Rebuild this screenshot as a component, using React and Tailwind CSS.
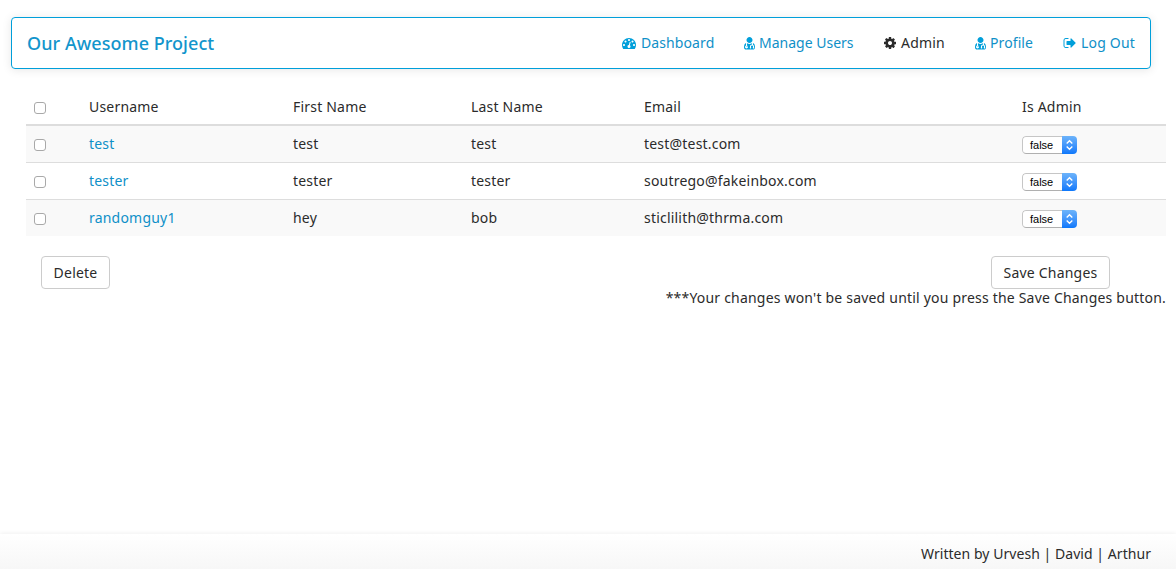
import React from "react";

const GAUGE =
  "M384 1152q0-53-37.5-90.5t-90.5-37.5-90.5 37.5-37.5 90.5 37.5 90.5 90.5 37.5 90.5-37.5 37.5-90.5zm192-448q0-53-37.5-90.5t-90.5-37.5-90.5 37.5-37.5 90.5 37.5 90.5 90.5 37.5 90.5-37.5 37.5-90.5zm428 481l101-382q6-26-7.5-48.5t-38.5-29.5-48 6.5-30 39.5l-101 382q-60 5-107 43.5t-63 98.5q-20 77 20 146t117 89 146-20 89-117q16-60-6-117t-72-91zm660-33q0-53-37.5-90.5t-90.5-37.5-90.5 37.5-37.5 90.5 37.5 90.5 90.5 37.5 90.5-37.5 37.5-90.5zm-640-640q0-53-37.5-90.5t-90.5-37.5-90.5 37.5-37.5 90.5 37.5 90.5 90.5 37.5 90.5-37.5 37.5-90.5zm448 192q0-53-37.5-90.5t-90.5-37.5-90.5 37.5-37.5 90.5 37.5 90.5 90.5 37.5 90.5-37.5 37.5-90.5zm320 448q0 261-141 483-19 29-54 29h-1402q-35 0-54-29-141-221-141-483 0-182 71-348t191-286 286-191 348-71 348 71 286 191 191 286 71 348z";
const COG =
  "M1152 896q0-106-75-181t-181-75-181 75-75 181 75 181 181 75 181-75 75-181zm512-109v222q0 12-8 23t-20 13l-185 28q-19 54-39 91 35 50 107 138 10 12 10 25t-9 23q-27 37-99 108t-94 71q-12 0-26-9l-138-108q-44 23-91 38-16 136-29 186-7 28-36 28h-222q-14 0-24.5-8.5t-11.5-21.5l-28-184q-49-16-90-37l-141 107q-10 9-25 9-14 0-25-11-126-114-165-168-7-10-7-23 0-12 8-23 15-21 51-66.5t54-70.5q-27-50-41-99l-183-27q-13-2-21-12.5t-8-23.5v-222q0-12 8-23t19-13l186-28q14-46 39-92-40-57-107-138-10-12-10-24 0-10 9-23 26-36 98.5-107.5t94.5-71.5q13 0 26 10l138 107q44-23 91-38 16-136 29-186 7-28 36-28h222q14 0 24.5 8.5t11.5 21.5l28 184q49 16 90 37l142-107q9-9 24-9 13 0 25 10 129 119 165 170 7 8 7 22 0 12-8 23-15 21-51 66.5t-54 70.5q26 50 41 98l183 28q13 2 21 12.5t8 23.5z";
const SIGN_OUT =
  "M704 1440q0 4 1 20t.5 26.5-3 23.5-10 19.5-20.5 6.5h-320q-119 0-203.5-84.5t-84.5-203.5v-704q0-119 84.5-203.5t203.5-84.5h320q13 0 22.5 9.5t9.5 22.5q0 4 1 20t.5 26.5-3 23.5-10 19.5-20.5 6.5h-320q-66 0-113 47t-47 113v704q0 66 47 113t113 47h312l11.5 1 11.5 3 8 5.5 7 9 2 13.5zm928-544q0 26-19 45l-544 544q-19 19-45 19t-45-19-19-45v-288h-448q-26 0-45-19t-19-45v-384q0-26 19-45t45-19h448v-288q0-26 19-45t45-19 45 19l544 544q19 19 19 45z";
const USER_MD =
  "M640 1344q0 26-19 45t-45 19-45-19-19-45 19-45 45-19 45 19 19 45zm960 128q0 121-73 190t-194 69h-874q-121 0-194-69t-73-190q0-68 5.5-131t24-138 47.5-132.5 81-103 120-60.5q-22 52-22 120v203q-58 20-93 70t-35 111q0 80 56 136t136 56 136-56 56-136q0-61-35.5-111t-92.5-70v-203q0-62 25-93 132 104 295 104t295-104q25 31 25 93v64q-106 0-181 75t-75 181v89q-32 29-32 71 0 40 28 68t68 28 68-28 28-68q0-42-32-71v-89q0-52 38-90t90-38 90 38 38 90v89q-32 29-32 71 0 40 28 68t68 28 68-28 28-68q0-42-32-71v-89q0-68-34.5-127.5t-93.5-93.5q0-10 .5-42.5t0-48-2.5-41.5-7-47-13-40q68 15 120 60.5t81 103 47.5 132.5 24 138 5.5 131zm-320-960q0 159-112.5 271.5t-271.5 112.5-271.5-112.5-112.5-271.5 112.5-271.5 271.5-112.5 271.5 112.5 112.5 271.5z";

function Glyph({ d, narrow }) {
  return (
    <svg
      viewBox={narrow ? "192 0 1408 1792" : "0 0 1792 1792"}
      className={narrow ? "h-3.5 w-[11px] fill-current" : "h-3.5 w-3.5 fill-current"}
    >
      <path d={d} />
    </svg>
  );
}

const NAV = [
  { label: "Dashboard", icon: <Glyph d={GAUGE} />, pos: "w-[93px] mr-[29px]", gap: "gap-[5px]", track: "tracking-[0.1px]" },
  { label: "Manage Users", icon: <Glyph d={USER_MD} narrow />, pos: "w-[110px] mr-[29px]", gap: "gap-[4px]", track: "tracking-[0]" },
  { label: "Admin", icon: <Glyph d={COG} />, active: true, pos: "w-[62px] mr-[30px]", gap: "gap-[4px]", track: "tracking-[0.2px]" },
  { label: "Profile", icon: <Glyph d={USER_MD} narrow />, pos: "w-[59px] mr-[29px]", gap: "gap-[4px]", track: "tracking-[0.1px]" },
  { label: "Log Out", icon: <Glyph d={SIGN_OUT} />, pos: "w-[73px]", gap: "gap-[4px]", track: "tracking-[0.2px]" },
];

const USERS = [
  { username: "test", first: "test", last: "test", email: "test@test.com" },
  { username: "tester", first: "tester", last: "tester", email: "soutrego@fakeinbox.com" },
  { username: "randomguy1", first: "hey", last: "bob", email: "sticlilith@thrma.com" },
];

function Checkbox() {
  return (
    <input
      type="checkbox"
      className="mt-[2px] block h-3 w-3 appearance-none rounded-[3px] border border-[#a9a9a9] bg-white"
    />
  );
}

function AdminSelect() {
  return (
    <button className="mt-px flex h-[18px] w-[55px] overflow-hidden rounded-[4px] font-['Liberation_Sans',sans-serif] text-[11px] tracking-normal text-black">
      <span className="flex h-full w-10 items-center rounded-l-[4px] border border-r-0 border-[#c6c6c6] border-b-[#b0b0b0] bg-white pt-px pl-[7px] leading-none">
        false
      </span>
      <span className="flex h-full w-[15px] items-center justify-center bg-linear-to-b from-[#6cb3fa] to-[#0b78fb]">
        <svg viewBox="0 0 9 12" className="h-3 w-[9px] fill-none stroke-white stroke-[1.4]">
          <path d="M1.7 4.5 4.5 1.8 7.3 4.5M1.7 7.5 4.5 10.2 7.3 7.5" />
        </svg>
      </span>
    </button>
  );
}

const COLS = "grid grid-cols-[55px_204px_178px_173px_378px_152px] pl-2";

export default function App() {
  return (
    <div className="flex h-[569px] w-[1176px] flex-col overflow-hidden bg-white font-['Noto_Sans',sans-serif] text-[14px] leading-5 tracking-[0.2px] text-[#2b2b2b]">
      <nav className="mt-[17px] ml-[11px] flex h-[52px] w-[1140px] shrink-0 items-center justify-between rounded-[4px] border border-[#009fda] pr-[14px] pl-[15px] shadow-[0_1px_10px_rgba(0,0,0,0.1)]">
        <a className="pb-px text-[18px] font-medium tracking-[0.05px] whitespace-nowrap text-[#1295cc]">Our Awesome Project</a>
        <div className="flex items-center">
          {NAV.map((n) => (
            <a
              key={n.label}
              className={`flex items-center whitespace-nowrap ${n.pos} ${n.gap} ${n.track} ${n.active ? "text-[#2b2b2b]" : "text-[#0f90c8]"}`}
            >
              <span className={`shrink-0 ${n.active ? "" : "text-[#009fda]"}`}>{n.icon}</span>
              {n.label}
            </a>
          ))}
        </div>
      </nav>

      <section className="mt-[19px] ml-[26px] w-[1140px]">
        <div className={`${COLS} h-[38px] items-center border-b-2 border-[#ddd] pt-[2px]`}>
          <Checkbox />
          <span>Username</span>
          <span>First Name</span>
          <span>Last Name</span>
          <span>Email</span>
          <span>Is Admin</span>
        </div>
        {USERS.map((u) => (
          <div
            key={u.username}
            className={`${COLS} h-[37px] items-center border-b border-[#ddd] odd:bg-white even:bg-[#f9f9f9] last:h-9 last:border-b-0`}
          >
            <Checkbox />
            <a className="text-[#0f90c8]">{u.username}</a>
            <span>{u.first}</span>
            <span>{u.last}</span>
            <span>{u.email}</span>
            <AdminSelect />
          </div>
        ))}
      </section>

      <section className="mt-5 ml-[41px] flex w-[1069px] justify-between">
        <button className="h-[33px] w-[69px] rounded-[4px] border border-[#ccc] bg-white whitespace-nowrap">Delete</button>
        <button className="h-[33px] w-[119px] rounded-[4px] border border-[#ccc] bg-white whitespace-nowrap">
          Save Changes
        </button>
      </section>
      <p className="mr-[10px] -mt-px self-end whitespace-nowrap">
        ***Your changes won't be saved until you press the Save Changes button.
      </p>

      <footer className="mt-auto flex h-[35px] shrink-0 items-center justify-end bg-linear-to-b from-white to-[#f7f7f7] pt-[5px] pr-[25px] shadow-[0_-1px_4px_rgba(0,0,0,0.06)]">
        <span className="tracking-[0.05px]">Written by Urvesh | David | Arthur</span>
      </footer>
    </div>
  );
}
